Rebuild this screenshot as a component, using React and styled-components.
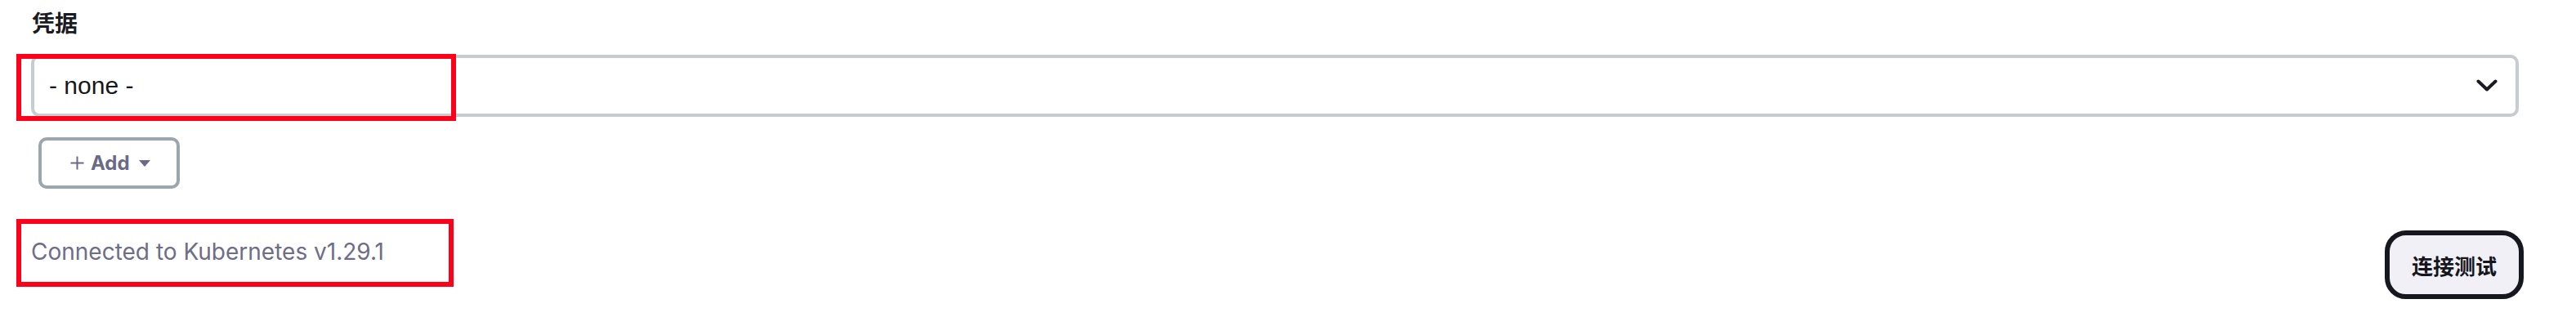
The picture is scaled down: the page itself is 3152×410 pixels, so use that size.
import React from "react";
import styled, { createGlobalStyle } from "styled-components";

const GlobalStyle = createGlobalStyle`
  html, body {
    margin: 0;
    padding: 0;
    background: #ffffff;
  }
  * { box-sizing: border-box; }
`;

const Page = styled.div`
  position: relative;
  width: 3152px;
  height: 410px;
  padding: 10px 70px 0 38px;
  font-family: Inter, "Liberation Sans", sans-serif;
`;

const FieldLabel = styled.div`
  font-family: "Liberation Sans", "Noto Sans CJK SC", sans-serif;
  font-weight: 700;
  font-size: 28px;
  line-height: 40px;
  color: #1b1b24;
  margin: 0 0 17px 1px;
`;

const SelectBox = styled.div`
  height: 76px;
  border: 4px solid #c5ccd2;
  border-radius: 10px;
  display: flex;
  align-items: center;
  justify-content: space-between;
  padding: 0 22px 0 18px;
  background: #fff;
`;

const SelectValue = styled.span`
  font-family: "Liberation Sans", Arial, sans-serif;
  font-size: 30px;
  color: #16161d;
`;

const Chevron = styled.svg`
  width: 26px;
  height: 16px;
  display: block;
`;

const AddButton = styled.button`
  margin: 25px 0 0 9px;
  height: 63px;
  padding: 0 32px 0 35px;
  border: 4px solid #9ba6ae;
  border-radius: 10px;
  background: #fff;
  display: inline-flex;
  align-items: center;
  color: #6b6a86;
  font-family: Inter, "Liberation Sans", sans-serif;
  font-weight: 700;
  font-size: 24px;
  cursor: pointer;
`;

const PlusIcon = styled.svg`
  width: 17px;
  height: 17px;
  margin-right: 8px;
  display: block;
`;

const Caret = styled.span`
  width: 0;
  height: 0;
  margin-left: 11px;
  border-left: 7.5px solid transparent;
  border-right: 7.5px solid transparent;
  border-top: 8px solid #6b6a86;
`;

const FooterRow = styled.div`
  margin-top: 51px;
  display: flex;
  justify-content: space-between;
  align-items: flex-start;
`;

const StatusText = styled.div`
  padding-top: 6px;
  font-family: Inter, "Liberation Sans", sans-serif;
  font-size: 28px;
  line-height: 40px;
  color: #6e6d88;
`;

const TestButton = styled.button`
  height: 84px;
  margin-right: -6px;
  padding: 0 27px;
  border: 6px solid #17171f;
  border-radius: 26px;
  background: #f0f0f6;
  font-family: "Noto Sans CJK SC", sans-serif;
  font-weight: 600;
  font-size: 26px;
  color: #16161d;
  cursor: pointer;
`;

const Highlight = styled.div`
  position: absolute;
  left: ${(p) => p.$left}px;
  top: ${(p) => p.$top}px;
  width: ${(p) => p.$width}px;
  height: ${(p) => p.$height}px;
  border: 6px solid #fe0019;
  pointer-events: none;
`;

export default function App() {
  return (
    <>
      <GlobalStyle />
      <Page>
        <FieldLabel>凭据</FieldLabel>
        <SelectBox>
          <SelectValue>- none -</SelectValue>
          <Chevron viewBox="0 0 26 16" fill="none">
            <polyline
              points="2.5,2.5 13,12.5 23.5,2.5"
              stroke="#1a1a22"
              strokeWidth="4"
              strokeLinecap="round"
              strokeLinejoin="round"
            />
          </Chevron>
        </SelectBox>
        <AddButton>
          <PlusIcon viewBox="0 0 17 17" fill="none">
            <path d="M8.5 0.5V16.5M0.5 8.5H16.5" stroke="#6b6a86" strokeWidth="2" />
          </PlusIcon>
          Add
          <Caret />
        </AddButton>
        <FooterRow>
          <StatusText>Connected to Kubernetes v1.29.1</StatusText>
          <TestButton>连接测试</TestButton>
        </FooterRow>
        <Highlight $left={20} $top={66} $width={538} $height={82} />
        <Highlight $left={20} $top={268} $width={535} $height={83} />
      </Page>
    </>
  );
}
